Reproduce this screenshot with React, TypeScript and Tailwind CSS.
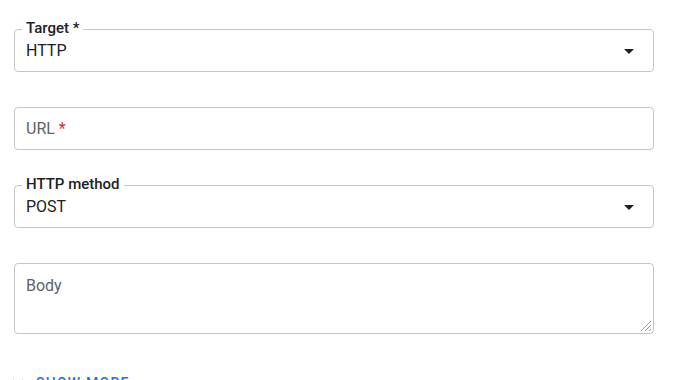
import React from 'react'

const font = { fontFamily: 'Roboto, "Noto Sans", Arial, sans-serif' }

function ArrowDrop() {
  return (
    <svg width="24" height="24" viewBox="0 0 24 24" className="shrink-0 fill-[#202124]">
      <path d="M7 10l5 5 5-5z" />
    </svg>
  )
}

function SelectField({ label, value }: { label: string; value: string }) {
  return (
    <div className="relative flex h-[43px] items-center rounded-[4px] border border-[#c6c6c6] pl-[11px] pr-[12px]">
      <span className="absolute left-[7px] top-[-10px] bg-white px-1 text-[15px] font-medium leading-4 text-[#202124]">
        {label}
      </span>
      <span className="flex-1 text-[16px] leading-6 text-[#202124]">{value}</span>
      <ArrowDrop />
    </div>
  )
}

export default function App() {
  return (
    <div className="h-[380px] overflow-hidden bg-white" style={font}>
      <div className="box-content flex w-[640px] flex-col gap-[35px] pl-[14px] pt-[29px]">
        <SelectField label="Target *" value="HTTP" />

        <div className="flex h-[43px] items-center rounded-[4px] border border-[#c6c6c6] px-[11px]">
          <span className="text-[16px] leading-6 text-[#5f6368]">
            URL <span className="text-[#d93025]">*</span>
          </span>
        </div>

        <SelectField label="HTTP method" value="POST" />

        <div className="relative h-[71px] rounded-[4px] border border-[#c6c6c6] px-[11px] pt-[10px]">
          <span className="text-[16px] leading-6 text-[#5f6368]">Body</span>
          {/* resize handle */}
          <svg width="14" height="14" viewBox="0 0 14 14" className="absolute bottom-[1px] right-[1px] stroke-[#9aa0a6]">
            <path d="M13 3L3 13M13 7L7 13M13 11L11 13" strokeWidth="1" />
          </svg>
        </div>

        <div className="mt-[2px] flex h-6 items-center gap-[6px] text-[#1a73e8]">
          <svg width="24" height="24" viewBox="0 0 24 24" className="-ml-[8px] fill-[#1a73e8]">
            <path d="M16.59 8.59L12 13.17 7.41 8.59 6 10l6 6 6-6z" />
          </svg>
          <span className="text-[14px] font-medium uppercase leading-5 tracking-[1.25px]">Show more</span>
        </div>
      </div>
    </div>
  )
}
